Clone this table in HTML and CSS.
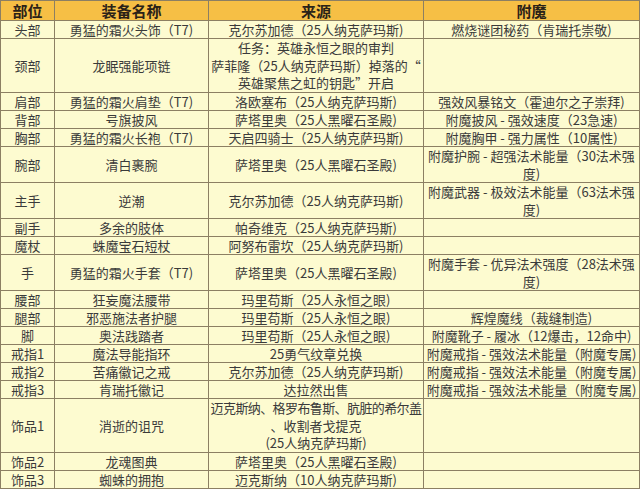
FILE: index.html
```html
<!DOCTYPE html>
<html lang="zh-CN">
<head>
<meta charset="utf-8">
<title>装备列表</title>
<link rel="stylesheet" href="styles.css">
</head>
<body>
<table class="gear">
  <colgroup>
    <col class="c-slot">
    <col class="c-name">
    <col class="c-src">
    <col class="c-ench">
  </colgroup>
  <thead>
    <tr class="head"><th>部位</th><th>装备名称</th><th>来源</th><th>附魔</th></tr>
  </thead>
  <tbody>
    <tr><td>头部</td><td>勇猛的霜火头饰（T7)</td><td>克尔苏加德（25人纳克萨玛斯)</td><td>燃烧谜团秘药（肯瑞托崇敬)</td></tr>
    <tr class="r3"><td>颈部</td><td>龙眠强能项链</td><td>任务：英雄永恒之眼的审判<br>萨菲隆（25人纳克萨玛斯）掉落的“<br>英雄聚焦之虹的钥匙”开启</td><td></td></tr>
    <tr><td>肩部</td><td>勇猛的霜火肩垫（T7)</td><td>洛欧塞布（25人纳克萨玛斯)</td><td>强效风暴铭文（霍迪尔之子崇拜)</td></tr>
    <tr><td>背部</td><td>号旗披风</td><td>萨塔里奥（25人黑曜石圣殿)</td><td>附魔披风 - 强效速度（23急速)</td></tr>
    <tr><td>胸部</td><td>勇猛的霜火长袍（T7)</td><td>天启四骑士（25人纳克萨玛斯)</td><td>附魔胸甲 - 强力属性（10属性)</td></tr>
    <tr class="r2"><td>腕部</td><td>清白裹腕</td><td>萨塔里奥（25人黑曜石圣殿)</td><td>附魔护腕 - 超强法术能量（30法术强<br>度)</td></tr>
    <tr class="r2"><td>主手</td><td>逆潮</td><td>克尔苏加德（25人纳克萨玛斯)</td><td>附魔武器 - 极效法术能量（63法术强<br>度)</td></tr>
    <tr><td>副手</td><td>多余的肢体</td><td>帕奇维克（25人纳克萨玛斯)</td><td></td></tr>
    <tr><td>魔杖</td><td>蛛魔宝石短杖</td><td>阿努布雷坎（25人纳克萨玛斯)</td><td></td></tr>
    <tr class="r2"><td>手</td><td>勇猛的霜火手套（T7)</td><td>萨塔里奥（25人黑曜石圣殿)</td><td>附魔手套 - 优异法术强度（28法术强<br>度)</td></tr>
    <tr><td>腰部</td><td>狂妄魔法腰带</td><td>玛里苟斯（25人永恒之眼)</td><td></td></tr>
    <tr><td>腿部</td><td>邪恶施法者护腿</td><td>玛里苟斯（25人永恒之眼)</td><td>辉煌魔线（裁缝制造)</td></tr>
    <tr><td>脚</td><td>奥法践踏者</td><td>玛里苟斯（25人永恒之眼)</td><td>附魔靴子 - 履冰（12爆击，12命中)</td></tr>
    <tr><td>戒指1</td><td>魔法导能指环</td><td>25勇气纹章兑换</td><td>附魔戒指 - 强效法术能量（附魔专属)</td></tr>
    <tr><td>戒指2</td><td>苦痛徽记之戒</td><td>克尔苏加德（25人纳克萨玛斯)</td><td>附魔戒指 - 强效法术能量（附魔专属)</td></tr>
    <tr><td>戒指3</td><td>肯瑞托徽记</td><td>达拉然出售</td><td>附魔戒指 - 强效法术能量（附魔专属)</td></tr>
    <tr class="r3"><td>饰品1</td><td>消逝的诅咒</td><td><span class="tight">迈克斯纳、格罗布鲁斯、肮脏的希尔盖</span><br>、收割者戈提克<br>(25人纳克萨玛斯)</td><td></td></tr>
    <tr><td>饰品2</td><td>龙魂图典</td><td>萨塔里奥（25人黑曜石圣殿)</td><td></td></tr>
    <tr><td>饰品3</td><td>蜘蛛的拥抱</td><td>迈克斯纳（10人纳克萨玛斯)</td><td></td></tr>
  </tbody>
</table>
</body>
</html>
```

FILE: styles.css
```css
html, body {
  margin: 0;
  padding: 0;
  background: #ffffff;
}

.gear {
  border-collapse: collapse;
  table-layout: fixed;
  width: 639px;
  background: #fdfbd0;
  font-family: "Noto Sans CJK SC", "Liberation Sans", sans-serif;
  font-size: 13px;
  color: #3a3a3a;
}

.c-slot { width: 54px; }
.c-name { width: 154px; }
.c-src  { width: 215px; }
.c-ench { width: 216px; }

.gear th,
.gear td {
  border: 1px solid #8c7f63;
  padding: 0;
  text-align: center;
  vertical-align: middle;
  white-space: nowrap;
  overflow: hidden;
}

.gear td {
  height: 17px;
  line-height: 17px;
}

.gear .head th {
  height: 19px;
  line-height: 19px;
  background: #f6bf45;
  font-size: 15px;
  font-weight: bold;
  color: #2a2218;
}

.gear .r2 td {
  height: 35px;
  line-height: 17.5px;
}

.gear .r3 td {
  height: 53px;
  line-height: 17.6px;
}

.tight {
  letter-spacing: -0.6px;
}
```
